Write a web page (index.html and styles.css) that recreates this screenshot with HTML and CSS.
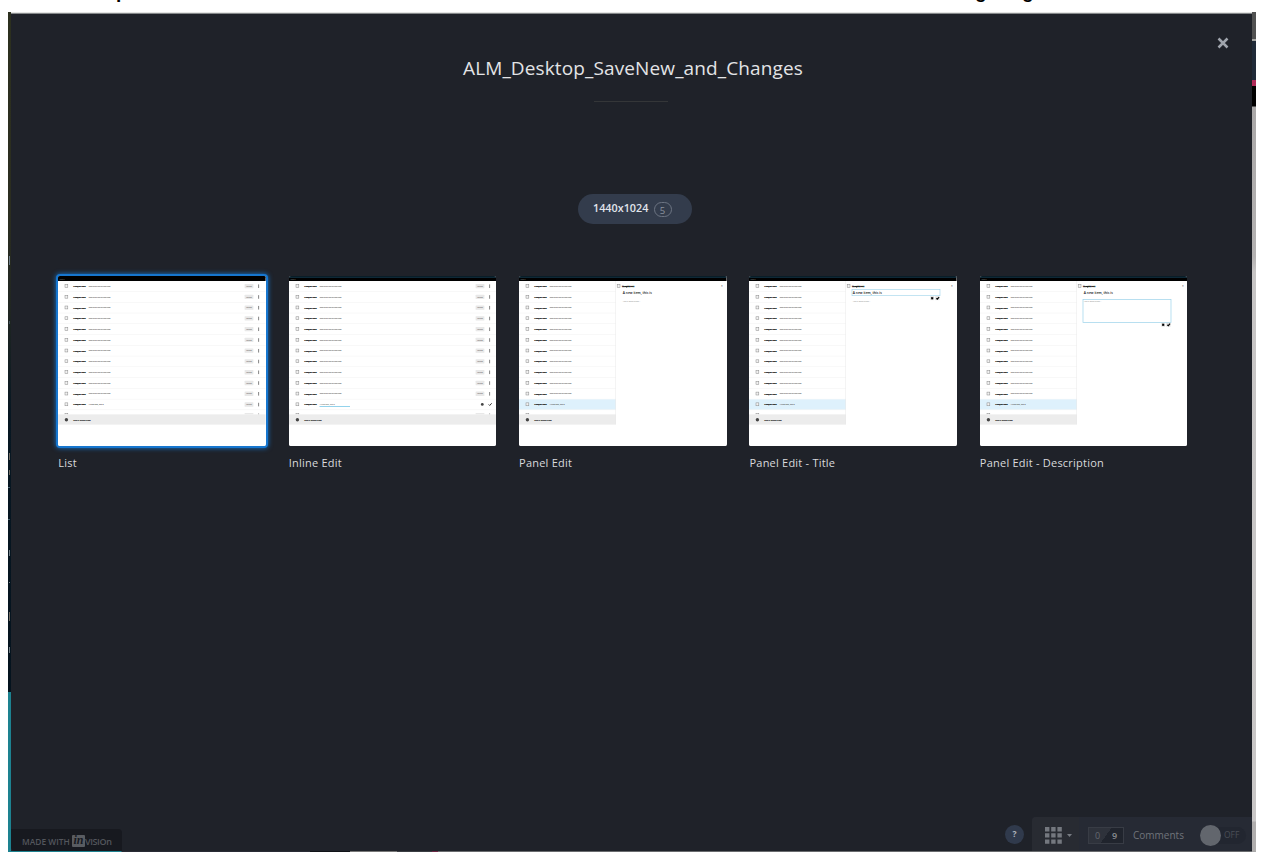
FILE: index.html
```html
<!DOCTYPE html>
<html lang="en">
<head>
<meta charset="utf-8">
<title>ALM_Desktop_SaveNew_and_Changes</title>
<link rel="stylesheet" href="styles.css">
</head>
<body>
<div class="caption"><span class="cap-a">p</span><span class="cap-b">g</span><span class="cap-c">g</span></div>
<div class="shot">
  <div class="edge-left"></div>
  <main class="overlay">
    <button class="close" aria-label="Close"><svg width="12" height="12" viewBox="0 0 12 12"><path d="M1.5 1.5 10.5 10.5M10.5 1.5 1.5 10.5" stroke="#a0a5ad" stroke-width="2.5"/></svg></button>
    <h1 class="title">ALM_Desktop_SaveNew_and_Changes</h1>
    <div class="rule"></div>
    <div class="pill"><span class="pill-size">1440x1024</span><span class="pill-count">5</span></div>
    <section class="screens" id="screens"></section>
    <footer class="footer">
      <div class="made"><span class="made-with">MADE WITH</span><span class="made-in">in</span><span class="made-vision">VISIOn</span></div>
      <div class="tools">
        <span class="help">?</span>
        <div class="bar">
          <div class="grid-btn">
            <svg width="17" height="17" viewBox="0 0 17 17" fill="#74787f"><path d="M0 0h4.4v4.4H0zM6.2 0h4.4v4.4H6.2zM12.4 0h4.4v4.4h-4.4zM0 6.2h4.4v4.4H0zM6.2 6.2h4.4v4.4H6.2zM12.4 6.2h4.4v4.4h-4.4zM0 12.4h4.4v4.4H0zM6.2 12.4h4.4v4.4H6.2zM12.4 12.4h4.4v4.4h-4.4z"/></svg>
            <svg width="5" height="3" viewBox="0 0 5 3" fill="#777b82"><path d="M0 0h5L2.5 3z"/></svg>
          </div>
          <div class="counts"><span class="count-read">0</span><span class="count-all">9</span></div>
          <span class="comments">Comments</span>
          <div class="toggle"><span class="knob"></span><span class="off">OFF</span></div>
        </div>
      </div>
    </footer>
  </main>
  <div class="edge-right"></div>
</div>
<div class="bottom-edge"></div>
<script src="script.js"></script>
</body>
</html>
```

FILE: styles.css
```css
* { box-sizing: border-box; }
body {
  margin: 0;
  width: 1266px;
  height: 862px;
  padding: 0 10px 0 8px;
  overflow: hidden;
  background: #fff;
  font-family: "Open Sans", "Noto Sans", sans-serif;
}
.caption {
  display: flex;
  height: 12px;
  overflow: hidden;
  color: #000;
  font: bold 19px/20px "Liberation Sans", Arial, sans-serif;
}
.caption span { margin-top: -18px; height: 20px; }
.cap-a { margin-left: 108px; width: 859px; }
.cap-b { width: 47px; }
.shot {
  display: grid;
  grid-template-columns: 3px 1241px 4px;
  height: 839px;
  background: #1f2229;
}
.edge-left {
  background:
    linear-gradient(#70808c, #70808c) 1px 244px / 1px 9px no-repeat,
    linear-gradient(#42545e, #42545e) 1px 309px / 1px 3px no-repeat,
    linear-gradient(#746f66, #746f66) 1px 441px / 1px 7px no-repeat,
    linear-gradient(#746f66, #746f66) 1px 458px / 1px 5px no-repeat,
    linear-gradient(#486370, #486370) 0 475px / 2px 1px no-repeat,
    linear-gradient(#486370, #486370) 0 507px / 2px 1px no-repeat,
    linear-gradient(#74828a, #74828a) 1px 538px / 1px 6px no-repeat,
    linear-gradient(#74828a, #74828a) 1px 570px / 1px 1px no-repeat,
    linear-gradient(#746f66, #746f66) 1px 600px / 1px 9px no-repeat,
    linear-gradient(#74828a, #74828a) 1px 635px / 1px 6px no-repeat,
    linear-gradient(#2c301f 0, #2b2d20 200px, #202622 300px, #071722 400px, #04131e 680px, #1d8290 680px);
}
.edge-right {
  background: linear-gradient(#515151 27px, #a5a5a2 27px 29px, #202a38 29px 68px, #b02b58 68px 74px, #000 74px 94px, #aaa8a8 95px, #b4b2b2 245px, #c7c5c5 260px, #c9c7c7 809px, #b0aeae 810px);
}
.overlay {
  display: flex;
  flex-direction: column;
  align-items: center;
  height: 839px;
  border-top: 1px solid #e4e5e3;
  box-shadow: inset 0 1px #85888a;
  border-radius: 0 0 4px 4px;
  background: #1f2229;
}
.close {
  align-self: flex-end;
  width: 12px;
  height: 12px;
  margin: 24px 23.5px 0 0;
  padding: 0;
  border: 0;
  background: none;
  display: flex;
}
.title {
  margin: 6px 0 0 3px;
  height: 26px;
  font-size: 19px;
  letter-spacing: .12px;
  line-height: 26px;
  font-weight: 400;
  color: #e3e4e6;
  white-space: nowrap;
}
.rule { width: 74px; height: 1px; margin: 20px 1px 0 0; background: #343638; }
.pill {
  display: flex;
  align-items: center;
  width: 114px;
  height: 30px;
  margin: 92px 0 0 6px;
  padding: 0 20px 0 15.5px;
  justify-content: space-between;
  border-radius: 15px;
  background: #333c4c;
  color: #e1e5ec;
  font-size: 10.8px;
}
.pill-size { font-weight: 600; line-height: 28px; margin-top: -2px; }
.pill-count {
  width: 18px;
  height: 15px;
  border: 1px solid #6c7482;
  border-radius: 7.5px;
  font-size: 9.5px;
  line-height: 15px;
  text-align: center;
  color: #8b929e;
  margin-top: 1px;
}
.screens {
  display: grid;
  grid-template-columns: repeat(5, 207.6px);
  column-gap: 22.8px;
  align-self: flex-start;
  margin: 52px 0 0 47.3px;
}
.screen { height: 196px; }
.thumb { display: block; width: 207.6px; height: 170px; border-radius: 2px; background: #fff; }
.thumb-active { box-shadow: 0 0 0 2px #1676cf, 0 0 5px 2px #1676cf; }
.thumb text { font-family: "Open Sans", sans-serif; }
.name { margin-top: 7px; line-height: 19px; font-size: 11px; letter-spacing: .22px; color: #d9dadd; white-space: nowrap; }
.footer {
  display: flex;
  align-self: stretch;
  align-items: flex-end;
  justify-content: space-between;
  margin-top: auto;
}
.made {
  display: flex;
  align-items: center;
  width: 111px;
  height: 22px;
  padding-left: 11px;
  border-radius: 0 4px 0 4px;
  background: #17191f;
  color: #53565c;
}
.made-with { width: 50px; font-size: 8.4px; font-weight: 600; white-space: nowrap; margin-top: 2px; }
.made-in {
  width: 13px;
  height: 12px;
  margin-top: 2px;
  border-radius: 1px;
  background: #595c61;
  color: #17191f;
  font: italic bold 12px/11px "Liberation Serif", serif;
  text-align: center;
}
.made-vision { font-size: 9px; letter-spacing: -.4px; font-weight: 600; margin-top: 2px; }
.tools { display: flex; align-items: center; gap: 8px; }
.help {
  width: 19px;
  height: 19px;
  border-radius: 50%;
  background: #303a4c;
  color: #b1b6be;
  font-size: 8.5px;
  font-weight: 700;
  line-height: 18px;
  text-align: center;
}
.bar {
  display: flex;
  align-items: center;
  width: 220px;
  height: 34px;
  border-radius: 4px 0 4px 0;
  background: #262a34;
}
.grid-btn {
  display: flex;
  align-items: center;
  gap: 5px;
  width: 47px;
  height: 34px;
  padding: 2px 0 0 13px;
  border-radius: 4px 0 0 0;
  background: #282b32;
}
.counts {
  display: flex;
  align-items: center;
  width: 36px;
  height: 17px;
  margin: 2px 9px 0 9px;
  border: 1px solid #383c45;
  background: linear-gradient(125deg, #2e323b 50%, #20242d 50%);
  font-size: 9px;
}
.counts span { width: 17px; text-align: center; }
.count-read { color: #646870; }
.count-all { color: #898c92; font-weight: 600; }
.comments { width: 67px; font-size: 10px; color: #70747b; margin-top: 2px; }
.toggle {
  display: flex;
  align-items: center;
  width: 46px;
  height: 17px;
  margin-top: 2px;
  border-radius: 9px;
  background: #222630;
}
.knob { flex: none; width: 21px; height: 21px; border-radius: 50%; background: #62666d; }
.off { margin: -2px 0 0 3px; font-size: 8.5px; color: #4a4e56; }
.bottom-edge {
  height: 1px;
  width: 1248px;
  background: linear-gradient(90deg, #1d8290 113px, #292b35 114px 302px, #101217 302px 342px, #777 342px 389px, #3a3d42 389px 424px, #6b2844 424px 430px, #696b6e 430px 1244px, #aaa 1244px);
}
```

FILE: script.js
```js
const screens = ['List', 'Inline Edit', 'Panel Edit', 'Panel Edit - Title', 'Panel Edit - Description'];

const text = (x, y, size, len, value, extra = '') =>
  `<text x="${x}" y="${y}" font-size="${size}" textLength="${len}" lengthAdjust="spacingAndGlyphs" ${extra}>${value}</text>`;

const rect = (x, y, w, h, fill, extra = '') =>
  `<rect x="${x}" y="${y}" width="${w}" height="${h}" fill="${fill}" ${extra}/>`;

const bookmark = (x, y) =>
  rect(x, y, 2.8, 2.9, '#f2f2f2', 'stroke="#888" stroke-width=".5"');

const actions = (x, y) =>
  rect(x, y, 3.8, 3.8, '#ddd') + rect(x + 5, y, 4.2, 3.8, '#ddd') +
  `<path d="M${x + 1} ${y + 1}l1.8 1.8m0-1.8l-1.8 1.8M${x + 6} ${y + 2}l1 .9 1.8-2" fill="none" stroke="#000" stroke-width="1.1"/>`;

function drawThumb(kind) {
  const panel = kind > 1;
  const width = panel ? 96.8 : 207.6;
  let s = '';
  for (let i = 0; i < 13; i++) {
    const y = 10.1 + i * 10.76;
    const fresh = i === 11;
    if (panel && fresh) s += rect(0, y - 5.1, width, 10.2, '#def1fc');
    s += rect(0, y + 5.2, width, .4, '#eee');
    s += bookmark(7, y - 1.6);
    s += text(15.3, y + .9, 2.2, 12.2, 'TASQUE-1000', 'font-weight="700" fill="#222" stroke="#222" stroke-width=".25"');
    const inline = kind === 1 && fresh;
    s += text(30.7, y + .8, 2.1, fresh ? 15 : 21.6, fresh ? 'A new item, this is' : 'This is the title of this item', `fill="${inline ? '#999' : '#444'}" stroke="#777" stroke-width=".08"`);
    if (inline) {
      s += rect(30.5, y + 1.6, 30.5, .8, '#78c8e8');
      s += `<circle cx="193.3" cy="${y}" r="1.4" fill="#444"/><path d="M199.7 ${y}l1 1 2-2.2" fill="none" stroke="#333" stroke-width="1"/>`;
    } else if (!panel) {
      s += rect(186.6, y - 2.2, 8.8, 4.4, '#e8e8e8', 'rx=".5"');
      s += text(188.3, y + .7, 2, 5.6, 'Medium', 'fill="#333"');
      s += rect(200.2, y - 1.7, .9, 3.6, '#777');
    }
  }
  s += rect(0, 138.4, 207.6, 31.6, '#fff') + rect(0, 138.4, width, 10.2, '#ececec');
  s += '<circle cx="8.4" cy="143.7" r="1.7" fill="#444"/>';
  s += text(15.3, 144.6, 2.2, 17.2, 'ADD A WORK ITEM', 'font-weight="700" fill="#333" stroke="#444" stroke-width=".2"');
  if (panel) {
    s += rect(96.6, 5, .4, 143.6, '#e4e4e4') + bookmark(98.2, 8.5);
    s += text(103, 11, 2.2, 12.4, 'TASQUE-1011', 'font-weight="700" fill="#000" stroke="#000" stroke-width=".3"');
    s += text(202, 11.2, 3, 1.8, '×', 'fill="#333"');
    if (kind === 3) s += rect(103, 13.5, 88, 6.2, '#fff', 'stroke="#9bd2ea" stroke-width=".6"') + actions(181.3, 20.3);
    if (kind === 4) s += rect(103, 23.4, 88, 23.2, '#fff', 'stroke="#9bd2ea" stroke-width=".7"') + actions(181.3, 46.8);
    s += text(103.8, 17.9, 3.7, 29, 'A new item, this is', 'fill="#111" font-weight="600"');
    s += text(103.8, 26.1, 2.2, 17.8, 'Add a description...', 'fill="#888"');
  }
  s += rect(0, 0, 207.6, 5, '#000') + rect(0, .5, 207.6, 1.2, kind ? '#153a4e' : '#000');
  s += text(1.5, 3.9, 1.8, 5, 'Tasque', 'fill="#888"');
  return `<svg class="thumb${kind ? '' : ' thumb-active'}" viewBox="0 0 207.6 170">${s}</svg>`;
}

document.getElementById('screens').innerHTML = screens
  .map((name, i) => `<div class="screen">${drawThumb(i)}<div class="name">${name}</div></div>`)
  .join('');
```
